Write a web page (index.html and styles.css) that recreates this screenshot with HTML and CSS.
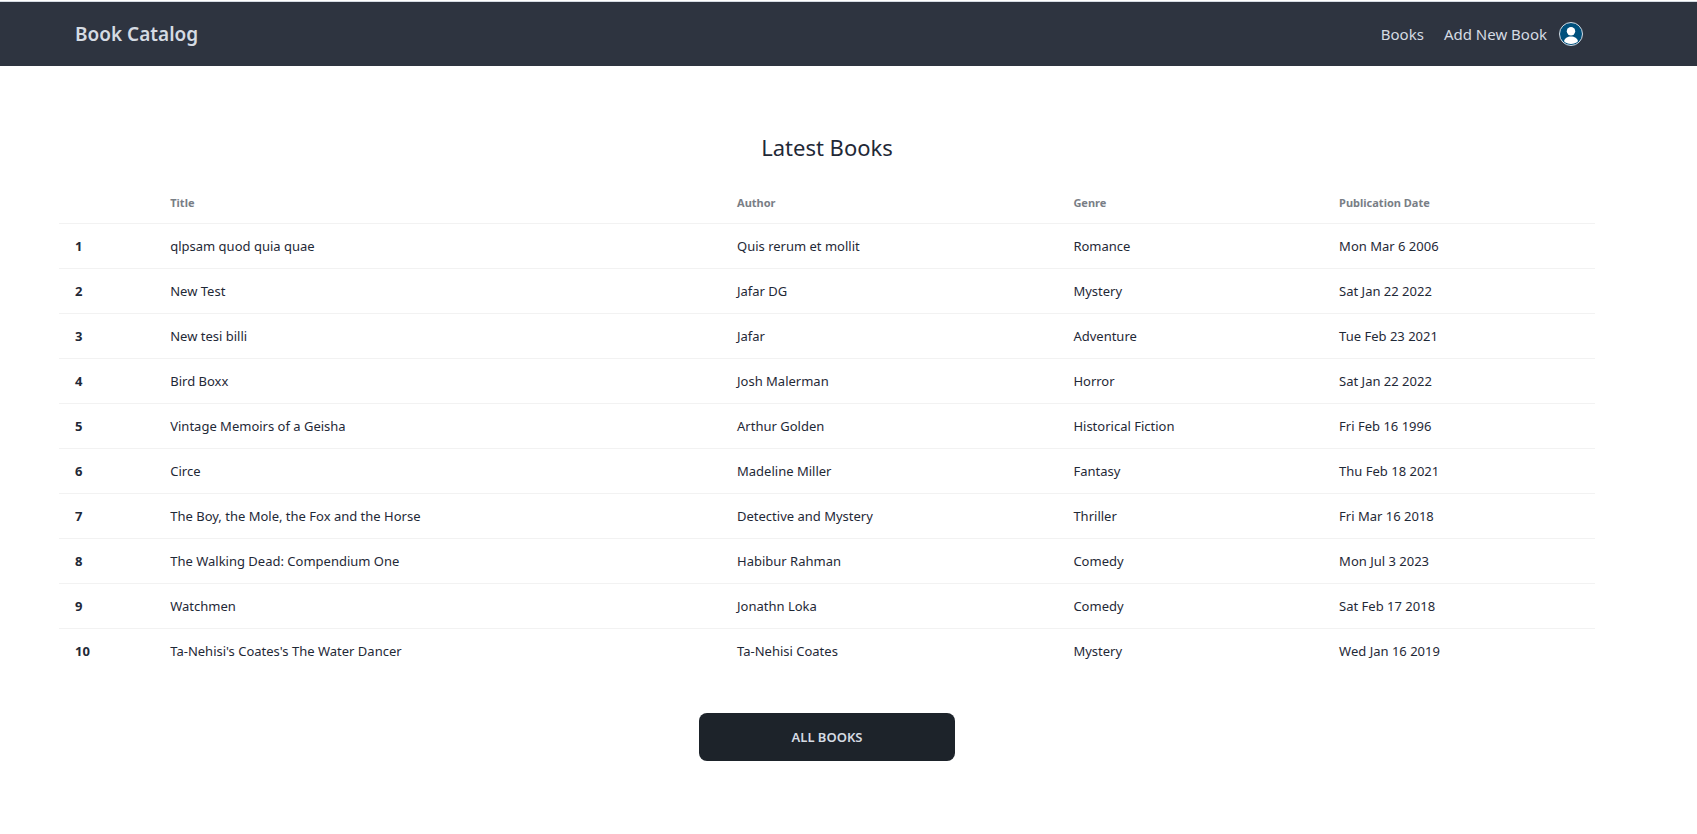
FILE: index.html
```html
<!DOCTYPE html>
<html lang="en">
<head>
<meta charset="utf-8">
<title>Book Catalog</title>
<link rel="stylesheet" href="styles.css">
</head>
<body>
<header class="navbar">
  <div class="container navbar-inner">
    <a class="brand" href="#">Book Catalog</a>
    <nav class="menu">
      <a class="menu-link" href="#">Books</a>
      <a class="menu-link" href="#">Add New Book</a>
      <button class="avatar" type="button" aria-label="Account">
        <svg viewBox="0 0 24 24" width="24" height="24" aria-hidden="true">
          <circle cx="12" cy="12" r="11.5" fill="#00507c" stroke="#d5dbe3"/>
          <circle cx="12" cy="9.3" r="4.2" fill="#fff"/>
          <path d="M5 19.2c.6-3 3.400-4.700 7-4.700s6.400 1.700 7 4.700c-1.800 1.800-4.200 2.800-7 2.800s-5.200-1-7-2.800z" fill="#fff"/>
        </svg>
      </button>
    </nav>
  </div>
</header>
<main class="content">
  <div class="container">
    <h1 class="heading">Latest Books</h1>
    <table class="books">
      <colgroup><col class="col-number"><col class="col-title"><col class="col-author"><col class="col-genre"><col class="col-date"></colgroup>
      <thead>
        <tr><td></td><th scope="col">Title</th><th scope="col">Author</th><th scope="col">Genre</th><th scope="col">Publication Date</th></tr>
      </thead>
      <tbody>
        <tr><th scope="row">1</th><td>qlpsam quod quia quae</td><td>Quis rerum et mollit</td><td>Romance</td><td>Mon Mar 6 2006</td></tr>
        <tr><th scope="row">2</th><td>New Test</td><td>Jafar DG</td><td>Mystery</td><td>Sat Jan 22 2022</td></tr>
        <tr><th scope="row">3</th><td>New tesi billi</td><td>Jafar</td><td>Adventure</td><td>Tue Feb 23 2021</td></tr>
        <tr><th scope="row">4</th><td>Bird Boxx</td><td>Josh Malerman</td><td>Horror</td><td>Sat Jan 22 2022</td></tr>
        <tr><th scope="row">5</th><td>Vintage Memoirs of a Geisha</td><td>Arthur Golden</td><td>Historical Fiction</td><td>Fri Feb 16 1996</td></tr>
        <tr><th scope="row">6</th><td>Circe</td><td>Madeline Miller</td><td>Fantasy</td><td>Thu Feb 18 2021</td></tr>
        <tr><th scope="row">7</th><td>The Boy, the Mole, the Fox and the Horse</td><td>Detective and Mystery</td><td>Thriller</td><td>Fri Mar 16 2018</td></tr>
        <tr><th scope="row">8</th><td>The Walking Dead: Compendium One</td><td>Habibur Rahman</td><td>Comedy</td><td>Mon Jul 3 2023</td></tr>
        <tr><th scope="row">9</th><td>Watchmen</td><td>Jonathn Loka</td><td>Comedy</td><td>Sat Feb 17 2018</td></tr>
        <tr><th scope="row">10</th><td>Ta-Nehisi's Coates's The Water Dancer</td><td>Ta-Nehisi Coates</td><td>Mystery</td><td>Wed Jan 16 2019</td></tr>
      </tbody>
    </table>
    <button class="all-books" type="button">ALL BOOKS</button>
  </div>
</main>
</body>
</html>
```
FILE: styles.css
```css
*, *::before, *::after { box-sizing: border-box; }

body {
  margin: 0;
  padding-top: 1px;
  background: #fff;
  color: #1f2937;
  font-family: "Segoe UI", "Noto Sans", "Open Sans", sans-serif;
  font-size: 13px;
  line-height: 20px;
}

.navbar,
.content { padding-right: 43px; }

.navbar {
  background: #2e3440;
  border-top: 1px solid #d5dbe3;
}

.container {
  max-width: 1536px;
  margin: 0 auto;
}

.navbar-inner {
  display: flex;
  align-items: center;
  justify-content: space-between;
  height: 64px;
  padding: 0 12px 0 16px;
}

.brand,
.menu-link {
  color: #d5dbe3;
  text-decoration: none;
}

.brand {
  font-size: 19px;
  font-weight: 600;
  line-height: 28px;
}

.menu {
  display: flex;
  align-items: center;
}

.menu-link {
  margin-right: 20px;
  font-size: 15px;
  line-height: 24px;
}

.menu-link:nth-of-type(2) { margin-right: 12px; }

.avatar {
  display: block;
  width: 24px;
  height: 24px;
  padding: 0;
  border: 0;
  border-radius: 50%;
  background: none;
}

.avatar svg { display: block; }

.content { padding-top: 65px; }

.heading {
  margin: 0 0 20px;
  font-size: 22px;
  font-weight: 400;
  line-height: 32px;
  text-align: center;
}

.books {
  width: 100%;
  table-layout: fixed;
  border-collapse: separate;
  border-spacing: 0;
  text-align: left;
}

.col-number { width: 6.2%; }
.col-title { width: 36.9%; }
.col-author { width: 21.9%; }
.col-genre { width: 17.3%; }
.col-date { width: 17.7%; }

.books th,
.books td {
  padding: 12px 16px;
  border-bottom: 1px solid #f2f2f2;
  line-height: 20px;
}

.books thead th {
  color: #797e86;
  font-size: 11px;
  font-weight: 700;
  line-height: 16px;
}

.books thead td { line-height: 16px; }

.books tbody tr:last-child > * { border-bottom: 0; }

.all-books {
  display: block;
  width: 256px;
  height: 48px;
  margin: 40px auto 0;
  border: 0;
  border-radius: 8px;
  background: #1d232a;
  color: #d5dbe3;
  font-family: inherit;
  font-size: 13px;
  font-weight: 600;
}
```
